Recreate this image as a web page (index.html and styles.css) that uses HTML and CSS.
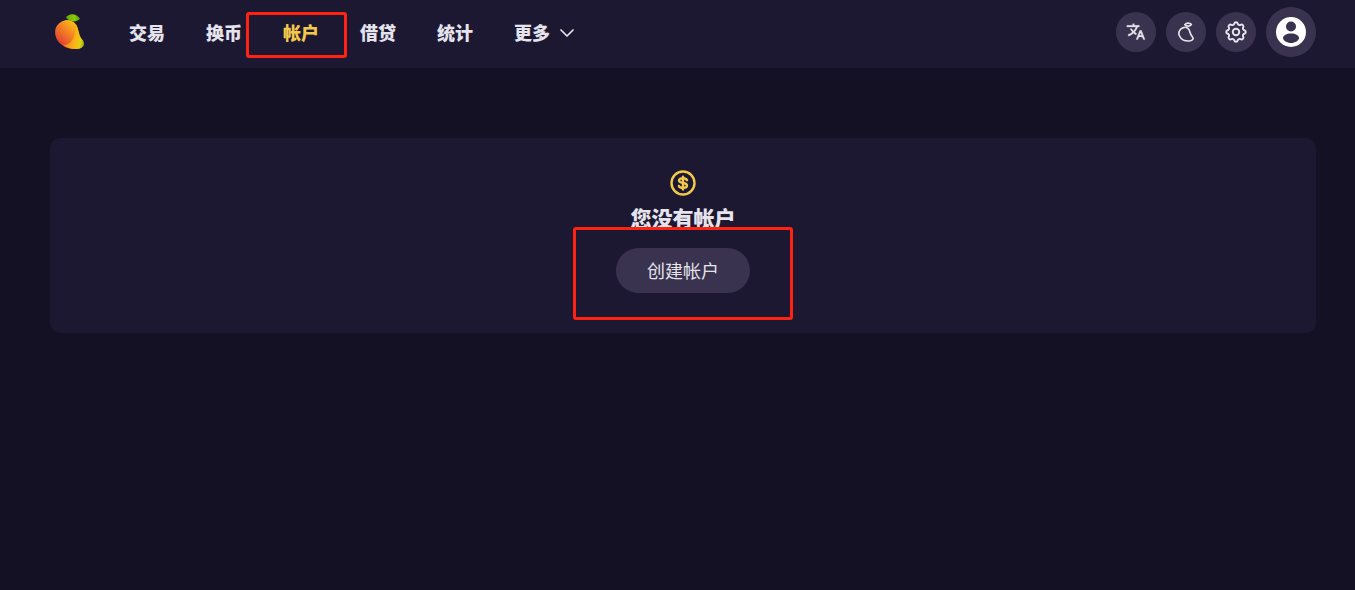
FILE: index.html
```
<!DOCTYPE html>
<html lang="zh-CN">
<head>
  <meta charset="UTF-8" />
  <meta name="viewport" content="width=device-width, initial-scale=1" />
  <title>Mango</title>
  <link rel="stylesheet" href="styles.css">
</head>

<body>
  <!-- Top bar -->
  <header class="topbar">
    <a class="logo" href="#" aria-label="Mango">
      <svg width="30" height="36" viewBox="0 0 30 36">
        <defs>
          <linearGradient id="mango-body" x1="0.1" y1="0.75" x2="0.75" y2="0.05">
            <stop offset="0" stop-color="#e54033" />
            <stop offset="0.5" stop-color="#f58225" />
            <stop offset="1" stop-color="#fecb0f" />
          </linearGradient>
          <linearGradient id="mango-side" x1="0" y1="0.5" x2="1" y2="0.7">
            <stop offset="0" stop-color="#f37a24" />
            <stop offset="0.6" stop-color="#fbb514" />
            <stop offset="0.85" stop-color="#e5cf12" />
            <stop offset="1" stop-color="#7cb81a" />
          </linearGradient>
          <linearGradient id="mango-leaf" x1="0" y1="0" x2="1" y2="0">
            <stop offset="0" stop-color="#62a60e" />
            <stop offset="0.6" stop-color="#8ccb05" />
            <stop offset="1" stop-color="#4f9a15" />
          </linearGradient>
        </defs>
        <path fill="url(#mango-body)" d="M9.500 6.500C14.500 5 20 7.500 22 12.500C24 18 23.500 21.500 26.500 25C30.500 29.500 29 34.500 21.500 35C13.500 35.500 6 32 2.300 26C-1.800 19 -0.500 9.500 9.500 6.500Z" />
        <path fill="url(#mango-side)" d="M20.500 9.800C24 14.500 23.500 20.500 26.300 24.500C31 29 29.500 34.500 21.500 35C16.500 35.200 11.500 33.500 8 31.300C16 31 21 24 20.500 9.800Z" />
        <path fill="url(#mango-leaf)" d="M11 3.500C13.500 -0.800 20.500 -1.500 25 4.500C23 8 15.500 9 11 3.500Z" />
      </svg>
    </a>

    <nav class="nav">
      <a class="nav-link" href="#">交易</a>
      <a class="nav-link" href="#">换币</a>
      <a class="nav-link active" href="#">帐户<span class="mark mark-nav"></span></a>
      <a class="nav-link" href="#">借贷</a>
      <a class="nav-link" href="#">统计</a>
      <button class="nav-link nav-more" type="button">更多
        <svg width="14" height="9" viewBox="0 0 14 9" fill="none" stroke="currentColor" stroke-width="1.700" stroke-linecap="round" stroke-linejoin="round">
          <path d="M1 1L7 7L13 1" />
        </svg>
      </button>
    </nav>

    <div class="actions">
      <button class="icon-btn" type="button" aria-label="语言">
        <svg width="20" height="20" viewBox="0 0 24 24" fill="currentColor" stroke="currentColor" stroke-width="0.300">
          <path d="M18.500 10L22.900 21H20.745L19.544 18H15.454L14.255 21H12.101L16.500 10H18.500ZM10 2V4H16V6L14.032 5.999C13.295 8.269 12.069 10.331 10.481 12.041C11.190 12.674 11.969 13.229 12.803 13.693L12.052 15.571C10.971 14.983 9.969 14.266 9.065 13.439C7.308 15.031 5.223 16.271 2.928 17.053L2.392 15.124C4.361 14.438 6.152 13.378 7.672 12.031C6.547 10.821 5.603 9.463 4.873 8L7.117 8.001C7.667 8.960 8.321 9.850 9.065 10.654C10.294 9.295 11.263 7.717 11.896 5.999L1 6V4H8V2H10ZM17.500 12.885L16.253 16H18.745L17.500 12.885Z" />
        </svg>
      </button>
      <button class="icon-btn" type="button" aria-label="主题">
        <svg width="20" height="20" viewBox="0 0 20 20" fill="none" stroke="currentColor" stroke-width="1.700" stroke-linejoin="round">
          <path d="M7.300 5.600C9.800 4.800 12.300 5.800 13.300 8.300C14.300 11 14.300 12.300 16 14.300C18 16.700 16.900 18.700 13.500 19C9.500 19.200 5.200 17.500 3.500 14C1.900 10.600 3.500 6.800 7.300 5.600Z" />
          <path d="M8.800 2.700C10.300 0.600 13.600 0.500 15.300 2.400C13.900 4.400 10.800 4.800 8.800 2.700Z" />
        </svg>
      </button>
      <button class="icon-btn" type="button" aria-label="设置">
        <svg width="26" height="26" viewBox="0 0 24 24" fill="none" stroke="currentColor" stroke-width="1.800" stroke-linecap="round" stroke-linejoin="round">
          <path d="M10.325 4.317c.426-1.756 2.924-1.756 3.350 0a1.724 1.724 0 002.573 1.066c1.543-.940 3.310.826 2.370 2.370a1.724 1.724 0 001.065 2.572c1.756.426 1.756 2.924 0 3.350a1.724 1.724 0 00-1.066 2.573c.940 1.543-.826 3.310-2.370 2.370a1.724 1.724 0 00-2.572 1.065c-.426 1.756-2.924 1.756-3.350 0a1.724 1.724 0 00-2.573-1.066c-1.543.940-3.310-.826-2.370-2.370a1.724 1.724 0 00-1.065-2.572c-1.756-.426-1.756-2.924 0-3.350a1.724 1.724 0 001.066-2.573c-.940-1.543.826-3.310 2.370-2.370.996.608 2.296.070 2.572-1.065z" />
          <circle cx="12" cy="12" r="3" />
        </svg>
      </button>
      <button class="icon-btn profile-btn" type="button" aria-label="用户">
        <svg width="30" height="30" viewBox="0 0 30 30">
          <circle cx="15" cy="15" r="15" fill="#ffffff" />
          <circle cx="15" cy="9.500" r="5" fill="#39334f" />
          <path fill="#39334f" d="M15 16.500C19.500 16.500 23 18.500 23 21C23 23.500 19 26 15 26C11 26 7 23.500 7 21C7 18.500 10.500 16.500 15 16.500Z" />
        </svg>
      </button>
    </div>
  </header>

  <!-- Empty account card -->
  <main class="content">
    <section class="card">
      <svg class="coin" width="26" height="26" viewBox="0 0 26 26" fill="none" stroke="currentColor">
        <circle cx="13" cy="13" r="11.500" stroke-width="2.400" />
        <path stroke-width="2.400" stroke-linecap="round" d="M17 10.200C16.400 8.700 14.800 8.200 13 8.200C10.800 8.200 9 9 9 10.600C9 12.200 10.800 12.600 13 13C15.200 13.400 17 13.900 17 15.500C17 17.100 15.200 17.900 13 17.900C11.200 17.900 9.500 17.200 8.900 15.900M13 6.700V19.400" />
      </svg>
      <h2 class="card-title">您没有帐户</h2>
      <button class="create-btn" type="button">创建帐户</button>
      <span class="mark mark-create"></span>
    </section>
  </main>
</body>
</html>
```
FILE: styles.css
```
* {
  box-sizing: border-box;
}

body {
  margin: 0;
  min-height: 100vh;
  font-family: Lato, "Noto Sans CJK SC", sans-serif;
  font-size: 18px;
  background-color: #141125;
  color: #e5e3ec;
}

button {
  padding: 0;
  border: none;
  background: none;
  font: inherit;
  color: inherit;
  cursor: pointer;
}

svg {
  display: block;
}

/* Top bar */
.topbar {
  display: flex;
  align-items: center;
  height: 68px;
  padding: 0 39px 4px 50px;
  background-color: #1d1832;
}

.logo {
  margin: 0 44px 0 5px;
}

.nav {
  display: flex;
  align-items: center;
  gap: 41px;
}

.nav-link {
  position: relative;
  padding-top: 2px;
  font-weight: 900;
  line-height: 24px;
  color: #e5e3ec;
  text-decoration: none;
}

.nav-link.active {
  color: #f2c94c;
}

.nav-more {
  display: flex;
  align-items: center;
  gap: 10px;
}

.actions {
  display: flex;
  align-items: center;
  gap: 10px;
  margin-left: auto;
}

.icon-btn {
  display: flex;
  align-items: center;
  justify-content: center;
  width: 40px;
  height: 40px;
  border-radius: 50%;
  background-color: #39334f;
}

.profile-btn {
  width: 50px;
  height: 50px;
}

/* Card */
.content {
  padding: 70px 39px 40px 50px;
}

.card {
  position: relative;
  display: flex;
  flex-direction: column;
  align-items: center;
  padding: 32px 30px 40px;
  border-radius: 10px;
  background-color: #1d1832;
}

.coin {
  color: #f2c94c;
}

.card-title {
  margin: 10px 0 18px;
  font-size: 21px;
  font-weight: 900;
  line-height: 24px;
}

.create-btn {
  height: 45px;
  padding: 0 31px 2px;
  border-radius: 23px;
  background-color: #39334f;
}

/* Red highlight frames */
.mark {
  position: absolute;
  border: 3px solid #ff2213;
  border-radius: 3px;
  pointer-events: none;
}

.mark-nav {
  top: -7px;
  left: -37px;
  width: 101px;
  height: 46px;
}

.mark-create {
  top: 89px;
  left: 50%;
  width: 220px;
  height: 93px;
  transform: translateX(-50%);
}
```
